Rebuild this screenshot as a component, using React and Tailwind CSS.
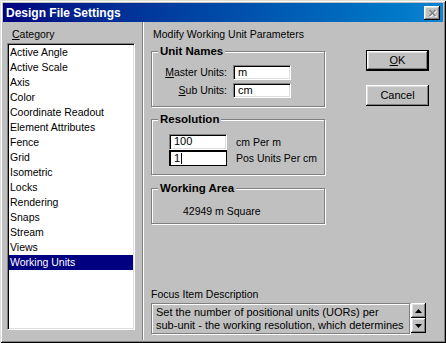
import React from "react";

const sunken =
  "border border-t-[#808080] border-l-[#808080] border-b-white border-r-white shadow-[inset_1px_1px_0_#000,inset_-1px_-1px_0_#dfdfdf]";
const raised =
  "bg-[#c0c0c0] shadow-[inset_-1px_-1px_0_#000,inset_1px_1px_0_#fff,inset_-2px_-2px_0_#808080,inset_2px_2px_0_#dfdfdf]";
const etched =
  "border border-[#808080] shadow-[inset_1px_1px_0_#fff,1px_1px_0_#fff]";

const items = [
  "Active Angle",
  "Active Scale",
  "Axis",
  "Color",
  "Coordinate Readout",
  "Element Attributes",
  "Fence",
  "Grid",
  "Isometric",
  "Locks",
  "Rendering",
  "Snaps",
  "Stream",
  "Views",
  "Working Units",
];

function Group({ title, children, className = "" }) {
  return (
    <fieldset className={`${etched} p-0 m-0 min-w-0 ${className}`}>
      <legend className="ml-[6px] px-[2px] bg-[#c0c0c0] font-bold text-[11.5px] leading-[14px]">
        {title}
      </legend>
      {children}
    </fieldset>
  );
}

function Arrow({ up }) {
  return (
    <svg width="7" height="4" viewBox="0 0 7 4">
      {up ? (
        <path d="M3.5 0 L7 4 L0 4 Z" fill="#000" />
      ) : (
        <path d="M0 0 L7 0 L3.5 4 Z" fill="#000" />
      )}
    </svg>
  );
}

export default function App() {
  return (
    <div className="w-[446px] h-[343px] bg-[#c0c0c0] p-[3px] flex flex-col font-['Liberation_Sans',Arial,sans-serif] text-black overflow-hidden shadow-[inset_1px_1px_0_#dfdfdf,inset_-1px_-1px_0_#000,inset_2px_2px_0_#fff,inset_-2px_-2px_0_#808080]">
      {/* Title bar */}
      <div className="h-[19px] shrink-0 flex items-center justify-between bg-linear-to-r from-[#000080] to-[#1084d0] pl-[3px] pr-[3px]">
        <span className="text-white font-bold text-[12px] leading-none">
          Design File Settings
        </span>
        <div className={`w-[16px] h-[14px] flex items-center justify-center ${raised}`}>
          <svg width="9" height="8" viewBox="0 0 9 8">
            <path d="M1.5 1 L7.5 7 M7.5 1 L1.5 7" stroke="#fff" strokeWidth="1.6" transform="translate(0.8 0.8)" />
            <path d="M1.5 1 L7.5 7 M7.5 1 L1.5 7" stroke="#808080" strokeWidth="1.6" />
          </svg>
        </div>
      </div>

      {/* Body */}
      <div className="flex flex-1 min-h-0">
        {/* Left: category */}
        <div className="w-[139px] shrink-0 flex flex-col pt-[6px] pb-[10px] pl-[4px]">
          <div className="pl-[5px] h-[13px] text-[10.5px] leading-[13px]">
            <span className="underline">C</span>ategory
          </div>
          <div className={`mt-[2px] w-[128px] flex-1 bg-white ${sunken} pt-[1px] pl-[1px] pr-[1px]`}>
            {items.map((it) => (
              <div
                key={it}
                className={`h-[15px] leading-[15px] text-[10.5px] pl-px whitespace-nowrap ${
                  it === "Working Units" ? "bg-[#000080] text-white" : ""
                }`}
              >
                {it}
              </div>
            ))}
          </div>
        </div>

        {/* Separator */}
        <div className="w-px bg-[#808080]" />
        <div className="w-px bg-white" />

        {/* Right */}
        <div className="flex-1 flex flex-col pl-[7px] pt-[6px] pb-[6px]">
          <div className="flex">
            <div className="w-[174px] shrink-0 flex flex-col">
              <div className="pl-[2px] h-[13px] text-[10.5px] leading-[13px] whitespace-nowrap">
                Modify Working Unit Parameters
              </div>

              <Group title="Unit Names" className="mt-[3px]">
                <div className="pt-[7px] pb-[8px] flex flex-col gap-[3px] text-[10.5px]">
                  <div className="flex items-center">
                    <div className="w-[75px] text-right leading-[15px]">
                      <span className="underline">M</span>aster Units:
                    </div>
                    <div className={`ml-[6px] w-[58px] h-[15px] bg-white ${sunken} pl-[4px] text-[11px] leading-[12px]`}>
                      m
                    </div>
                  </div>
                  <div className="flex items-center">
                    <div className="w-[75px] text-right leading-[15px]">
                      <span className="underline">S</span>ub Units:
                    </div>
                    <div className={`ml-[6px] w-[58px] h-[15px] bg-white ${sunken} pl-[4px] text-[11px] leading-[12px]`}>
                      cm
                    </div>
                  </div>
                </div>
              </Group>

              <Group title="Resolution" className="mt-[5px]">
                <div className="pt-[8px] pb-[8px] pl-[17px] flex flex-col text-[10.5px]">
                  <div className="flex items-center">
                    <div className={`w-[58px] h-[16px] bg-white ${sunken} pl-[4px] text-[11px] leading-[13px]`}>
                      100
                    </div>
                    <div className="ml-[9px] leading-[16px]">cm Per m</div>
                  </div>
                  <div className="flex items-center">
                    <div className="w-[58px] h-[16px] bg-white border border-black shadow-[inset_1px_1px_0_#000] pl-[4px] text-[11px] leading-[13px] flex items-center">
                      <span>1</span>
                      <span className="ml-[1px] w-px h-[11px] bg-black" />
                    </div>
                    <div className="ml-[9px] leading-[16px] whitespace-nowrap">Pos Units Per cm</div>
                  </div>
                </div>
              </Group>

              <Group title="Working Area" className="mt-[6px]">
                <div className="pt-[9px] pb-[5px] pl-[31px] text-[10.5px] leading-[14px]">
                  42949 m Square
                </div>
              </Group>
            </div>

            <div className="ml-[41px] pt-[22px] flex flex-col gap-[14px] text-[11px]">
              <div className="w-[63px] h-[21px] border border-black">
                <div className={`w-full h-full ${raised} flex items-center justify-center leading-none`}>
                  <span>
                    <span className="underline">O</span>K
                  </span>
                </div>
              </div>
              <div className={`w-[63px] h-[21px] ${raised} flex items-center justify-center leading-none`}>
                Cancel
              </div>
            </div>
          </div>

          <div className="mt-auto text-[10.5px] leading-[14px]">Focus Item Description</div>
          <div className="mt-[2px] flex">
            <div className={`w-[259px] h-[31px] ${etched} pl-[4px] pt-[2px] text-[11px] leading-[13px] whitespace-nowrap overflow-hidden`}>
              <div>Set the number of positional units (UORs) per</div>
              <div>sub-unit - the working resolution, which determines</div>
            </div>
            <div className="ml-[1px] flex flex-col">
              <div className={`w-[15px] h-[15px] ${raised} flex items-center justify-center`}>
                <Arrow up />
              </div>
              <div className={`w-[15px] h-[15px] ${raised} flex items-center justify-center`}>
                <Arrow />
              </div>
            </div>
          </div>
        </div>
      </div>
    </div>
  );
}
